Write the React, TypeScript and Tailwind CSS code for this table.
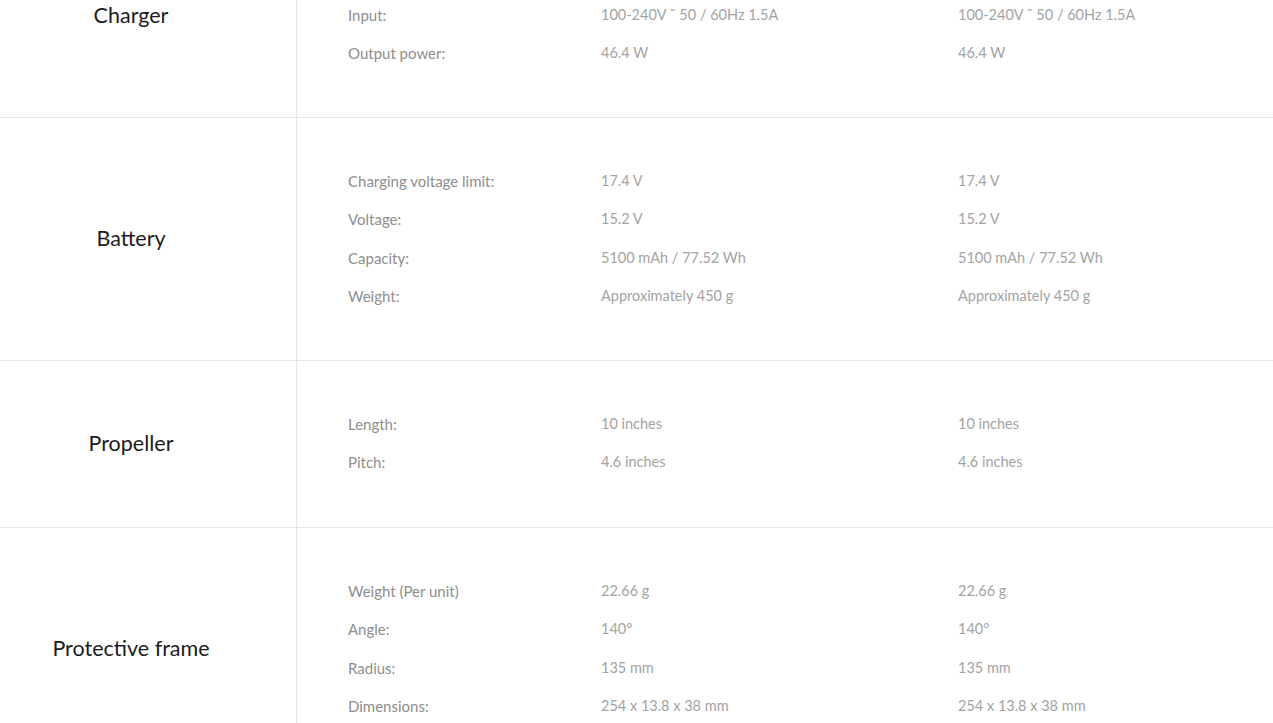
import React from "react";

type Section = { title: string; rows: [string, string][]; pt: string; pb: string };

const sections: Section[] = [
  {
    title: "Charger",
    pt: "pt-[82.5px]",
    pb: "pb-[44px]",
    rows: [
      ["Input:", "100-240V ˜ 50 / 60Hz 1.5A"],
      ["Output power:", "46.4 W"],
    ],
  },
  {
    title: "Battery",
    pt: "pt-[44px]",
    pb: "pb-[44px]",
    rows: [
      ["Charging voltage limit:", "17.4 V"],
      ["Voltage:", "15.2 V"],
      ["Capacity:", "5100 mAh / 77.52 Wh"],
      ["Weight:", "Approximately 450 g"],
    ],
  },
  {
    title: "Propeller",
    pt: "pt-[44px]",
    pb: "pb-[45px]",
    rows: [
      ["Length:", "10 inches"],
      ["Pitch:", "4.6 inches"],
    ],
  },
  {
    title: "Protective frame",
    pt: "pt-[44px]",
    pb: "pb-[44px]",
    rows: [
      ["Weight (Per unit)", "22.66 g"],
      ["Angle:", "140°"],
      ["Radius:", "135 mm"],
      ["Dimensions:", "254 x 13.8 x 38 mm"],
    ],
  },
];

export default function App() {
  return (
    <div
      className="w-[1273px] h-[723px] overflow-hidden bg-white"
      style={{ fontFamily: "Lato, 'Noto Sans', sans-serif" }}
    >
      <div className="-mt-[87px] flex flex-col">
        {sections.map((s, i) => (
          <div
            key={s.title}
            className={`flex ${i > 0 ? "border-t border-[#e6e6e6]" : ""}`}
          >
            <div className="w-[296px] shrink-0 flex items-center justify-center pr-[34px] text-[21.5px] text-[#1c1c1c]">
              {s.title}
            </div>
            <div
              className={`flex-1 border-l border-[#e6e6e6] pl-[51px] ${s.pt} ${s.pb}`}
            >
              {s.rows.map(([k, v]) => (
                <div key={k} className="flex h-[38.5px] items-center leading-[20px]">
                  <div className="w-[253px] text-[15px] text-[#8e8e8e]">{k}</div>
                  <div className="w-[357px] text-[14.5px] text-[#a3a3a3]">{v}</div>
                  <div className="text-[14.5px] text-[#a3a3a3]">{v}</div>
                </div>
              ))}
            </div>
          </div>
        ))}
      </div>
    </div>
  );
}
